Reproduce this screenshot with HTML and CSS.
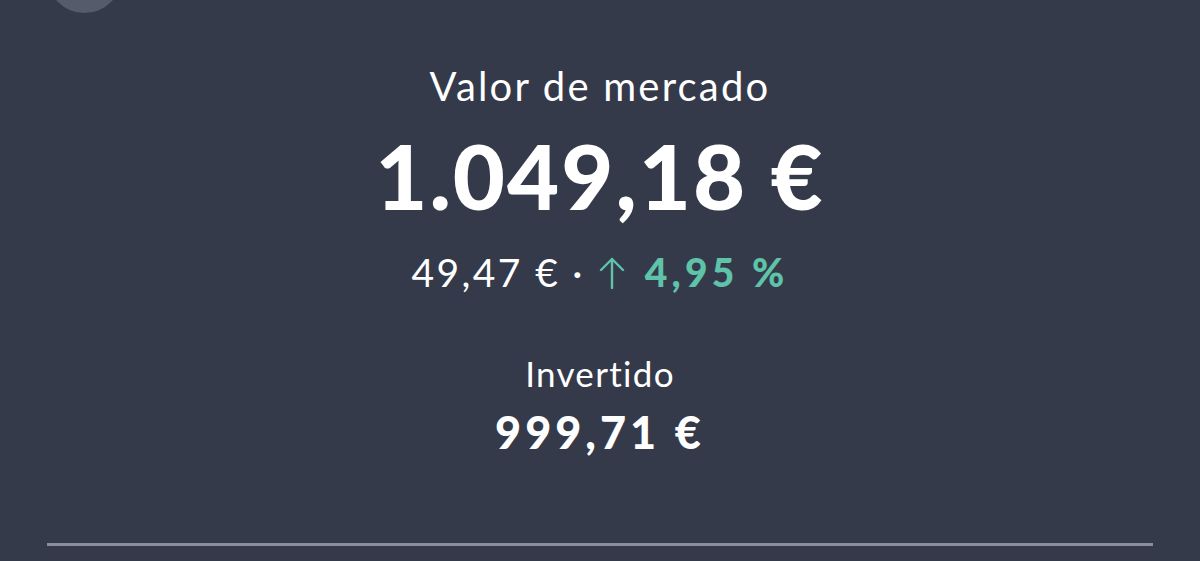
FILE: index.html
```html
<!DOCTYPE html>
<html lang="es">
  <head>
    <meta charset="UTF-8" />
    <meta name="viewport" content="width=device-width, initial-scale=1.0" />
    <title>Cartera</title>
    <link rel="stylesheet" href="styles.css">
  </head>
  <body>
    <div class="header">
      <span class="back-btn"></span>
    </div>

    <div class="summary">
      <p class="label">Valor de mercado</p>
      <p class="value">1.049,18 €</p>
      <p class="change">
        <span>49,47 €</span>
        <span class="dot">·</span>
        <span class="up">
          <svg class="arrow" width="26" height="32" viewBox="0 0 26 32">
            <path d="M13 31 V2 M2 13 L13 2 L24 13" fill="none" stroke="currentColor" stroke-width="2.4" stroke-linecap="round" stroke-linejoin="round" />
          </svg>
          <strong>4,95 %</strong>
        </span>
      </p>

      <p class="sub-label">Invertido</p>
      <p class="sub-value">999,71 €</p>
    </div>

    <hr class="divider" />
  </body>
</html>
```

FILE: styles.css
```css
body {
  margin: 0;
  font-family: Lato, "Open Sans", sans-serif;
  background-color: #353a4b;
  color: #fff;
  height: 561px;
  overflow: hidden;
}

.header {
  display: flow-root;
  height: 0;
  padding-left: 47px;
}

.back-btn {
  display: block;
  width: 75px;
  height: 75px;
  margin-top: -62px;
  border-radius: 50%;
  background: #565b6c;
}

.summary {
  display: flex;
  flex-direction: column;
  align-items: center;
  text-align: center;
  padding-top: 62px;
}

.summary p {
  margin: 0;
}

.label {
  font-size: 40px;
  line-height: 48px;
  letter-spacing: 2.2px;
}

.value {
  font-size: 90px;
  line-height: 100px;
  font-weight: 900;
  margin-top: 15px !important;
  letter-spacing: 2px;
}

.change {
  font-size: 39px;
  line-height: 46px;
  margin-top: 24px !important;
  display: flex;
  align-items: center;
  letter-spacing: 2.4px;
}

.dot {
  margin: 0 14px 0 12px;
}

.up {
  color: #5ec3a8;
  display: flex;
  align-items: center;
  gap: 20px;
}

.arrow {
  margin-top: 2px;
}

.up strong {
  font-weight: 900;
  letter-spacing: 4.2px;
}

.sub-label {
  font-size: 35px;
  line-height: 42px;
  margin-top: 57px !important;
  letter-spacing: 1.3px;
}

.sub-value {
  font-size: 45px;
  line-height: 54px;
  font-weight: 900;
  margin-top: 11px !important;
  letter-spacing: 4px;
}

.divider {
  margin: 84px 47px 0;
  border: none;
  height: 3px;
  background: #8a8d9e;
}
```
